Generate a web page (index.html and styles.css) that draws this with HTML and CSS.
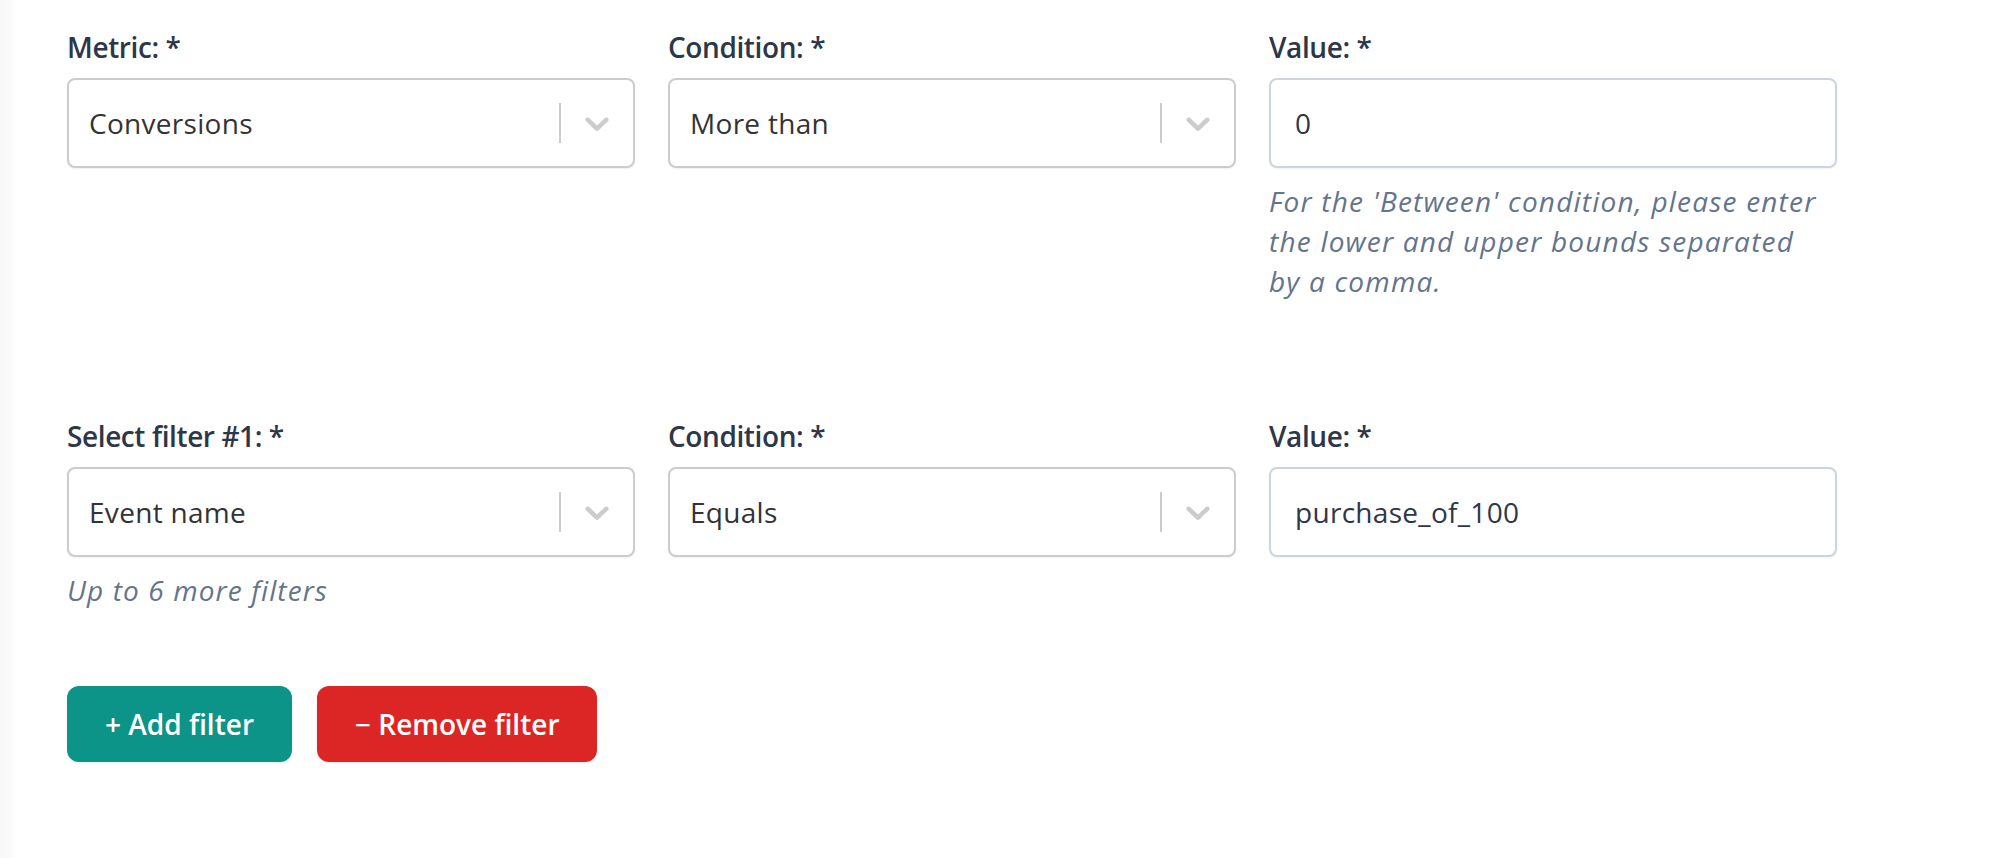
FILE: index.html
```html
<!DOCTYPE html>
<html lang="en">
<head>
<meta charset="utf-8">
<title>Filters</title>
<link rel="stylesheet" href="styles.css">
</head>
<body>
<div class="page">
  <div class="row row-metric">
    <div class="field">
      <label class="label">Metric: *</label>
      <div class="select">
        <div class="select-value">Conversions</div>
        <span class="sep"></span>
        <span class="indicator"><svg viewBox="0 0 20 20" width="40" height="40"><path d="M4.516 7.548c0.436-0.446 1.043-0.481 1.576 0l3.908 3.747 3.908-3.747c0.533-0.481 1.141-0.446 1.574 0 0.436 0.445 0.408 1.197 0 1.615-0.406 0.418-4.695 4.502-4.695 4.502-0.217 0.223-0.502 0.335-0.787 0.335s-0.57-0.112-0.789-0.335c0 0-4.287-4.084-4.695-4.502s-0.436-1.170 0-1.615z"/></svg></span>
      </div>
    </div>
    <div class="field">
      <label class="label">Condition: *</label>
      <div class="select">
        <div class="select-value">More than</div>
        <span class="sep"></span>
        <span class="indicator"><svg viewBox="0 0 20 20" width="40" height="40"><path d="M4.516 7.548c0.436-0.446 1.043-0.481 1.576 0l3.908 3.747 3.908-3.747c0.533-0.481 1.141-0.446 1.574 0 0.436 0.445 0.408 1.197 0 1.615-0.406 0.418-4.695 4.502-4.695 4.502-0.217 0.223-0.502 0.335-0.787 0.335s-0.57-0.112-0.789-0.335c0 0-4.287-4.084-4.695-4.502s-0.436-1.170 0-1.615z"/></svg></span>
      </div>
    </div>
    <div class="field">
      <label class="label">Value: *</label>
      <div class="input">0</div>
      <p class="hint hint-wrap">For the 'Between' condition, please enter the lower and upper bounds separated by a comma.</p>
    </div>
  </div>

  <div class="row row-filter">
    <div class="field">
      <label class="label">Select filter #1: *</label>
      <div class="select">
        <div class="select-value">Event name</div>
        <span class="sep"></span>
        <span class="indicator"><svg viewBox="0 0 20 20" width="40" height="40"><path d="M4.516 7.548c0.436-0.446 1.043-0.481 1.576 0l3.908 3.747 3.908-3.747c0.533-0.481 1.141-0.446 1.574 0 0.436 0.445 0.408 1.197 0 1.615-0.406 0.418-4.695 4.502-4.695 4.502-0.217 0.223-0.502 0.335-0.787 0.335s-0.57-0.112-0.789-0.335c0 0-4.287-4.084-4.695-4.502s-0.436-1.170 0-1.615z"/></svg></span>
      </div>
      <p class="hint">Up to 6 more filters</p>
    </div>
    <div class="field">
      <label class="label">Condition: *</label>
      <div class="select">
        <div class="select-value">Equals</div>
        <span class="sep"></span>
        <span class="indicator"><svg viewBox="0 0 20 20" width="40" height="40"><path d="M4.516 7.548c0.436-0.446 1.043-0.481 1.576 0l3.908 3.747 3.908-3.747c0.533-0.481 1.141-0.446 1.574 0 0.436 0.445 0.408 1.197 0 1.615-0.406 0.418-4.695 4.502-4.695 4.502-0.217 0.223-0.502 0.335-0.787 0.335s-0.57-0.112-0.789-0.335c0 0-4.287-4.084-4.695-4.502s-0.436-1.170 0-1.615z"/></svg></span>
      </div>
    </div>
    <div class="field">
      <label class="label">Value: *</label>
      <div class="input">purchase_of_100</div>
    </div>
  </div>

  <div class="actions">
    <button class="btn btn-add">+ Add filter</button>
    <button class="btn btn-remove">− Remove filter</button>
  </div>
</div>
</body>
</html>
```

FILE: styles.css
```css
html, body {
  margin: 0;
  padding: 0;
}

body {
  background: linear-gradient(to right, #f8f8f8 0, #fbfbfb 13px, #ffffff 15px, #ffffff 100%);
  font-family: "Open Sans", "Liberation Sans", sans-serif;
  font-size: 28px;
  line-height: 40px;
  color: #2d3748;
  min-height: 858px;
}

.page {
  padding: 27px 0 0 67px;
}

.row {
  display: grid;
  grid-template-columns: 568px 568px 568px;
  column-gap: 33px;
  align-items: start;
}

.row-metric {
  margin-bottom: 115px;
}

.field {
  display: flex;
  flex-direction: column;
}

.label {
  display: block;
  font-weight: 600;
  color: #2d3748;
  letter-spacing: -0.4px;
  margin-bottom: 11px;
}

.select {
  box-sizing: border-box;
  height: 90px;
  border: 2px solid #cccccc;
  border-radius: 8px;
  background: #ffffff;
  display: flex;
  align-items: center;
  box-shadow: 0 1px 2px rgba(0, 0, 0, 0.06);
}

.select-value {
  flex: 1;
  padding-left: 20px;
  color: #333333;
  letter-spacing: 0.3px;
  white-space: nowrap;
}

.sep {
  width: 2px;
  height: 40px;
  background: #cccccc;
}

.indicator {
  display: flex;
  padding: 0 16px;
}

.indicator svg {
  fill: #cccccc;
  display: block;
}

.input {
  box-sizing: border-box;
  height: 90px;
  border: 2px solid #cbd5e0;
  border-radius: 8px;
  background: #ffffff;
  padding: 0 24px;
  display: flex;
  align-items: center;
  color: #2d3748;
  letter-spacing: 0.3px;
  box-shadow: 0 1px 2px rgba(0, 0, 0, 0.05);
}

.hint {
  margin: 13px 0 0 0;
  font-style: italic;
  color: #64748b;
  letter-spacing: 1.1px;
}

.hint-wrap {
  max-width: 556px;
  letter-spacing: 1.2px;
}

.actions {
  display: flex;
  gap: 25px;
  margin-top: 76px;
}

.btn {
  font-family: "Open Sans", "Liberation Sans", sans-serif;
  font-size: 28px;
  line-height: 40px;
  font-weight: 600;
  color: #ffffff;
  border: none;
  border-radius: 12px;
  padding: 18px 38px;
  box-shadow: 0 1px 2px rgba(0, 0, 0, 0.08);
  cursor: pointer;
}

.btn-add {
  background: #0d9488;
}

.btn-remove {
  background: #dc2626;
}
```
